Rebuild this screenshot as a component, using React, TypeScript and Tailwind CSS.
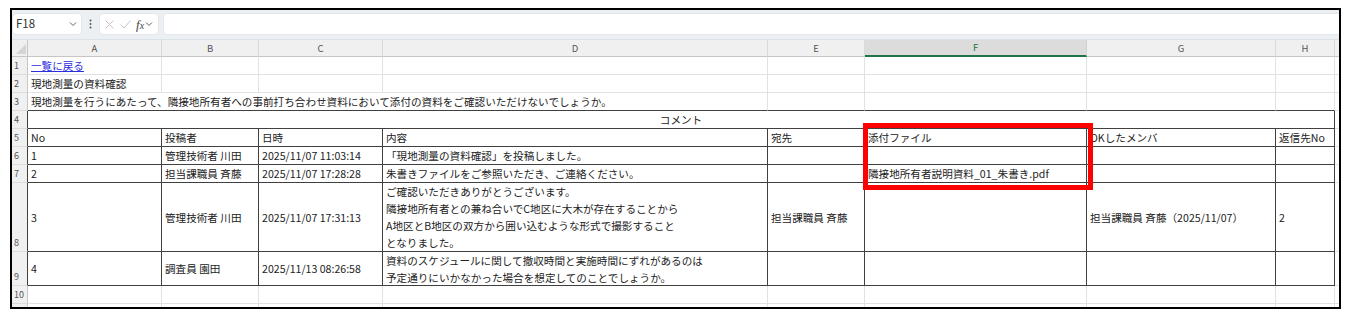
import React from "react";

const txt = "px-[3px] flex whitespace-nowrap text-[#222] leading-[17px]";
const gl = "border-r border-b border-r-[#e2e2e2] border-b-[#e2e2e2]";
const glDb = "border-r border-b border-r-[#e2e2e2] border-b-[#404040]";
const dd = "border-r border-b border-r-[#404040] border-b-[#404040]";
const extra = "border-b border-b-[#e2e2e2]";

function RowHead({ n, dark }: { n?: number; dark?: boolean }) {
  return (
    <div
      className={
        "bg-[#f0f0f0] border-b border-b-[#dcdcdc] border-r flex items-end pl-[2px] pb-[1px] text-[9px] leading-[14px] text-[#555] " +
        (dark ? "border-r-[#404040]" : "border-r-[#c6c6c6]")
      }
    >
      {n}
    </div>
  );
}

function Blank({ cls, n }: { cls: string; n: number }) {
  return (
    <>
      {Array.from({ length: n }).map((_, i) => (
        <div key={i} className={cls} />
      ))}
    </>
  );
}

function DataRow({ n, cells }: { n: number; cells: (string | string[])[] }) {
  return (
    <>
      <RowHead n={n} dark />
      {cells.map((c, i) =>
        Array.isArray(c) ? (
          <div key={i} className={dd + " " + txt + " flex-col items-start"}>
            {c.map((l, j) => (
              <span key={j}>{l}</span>
            ))}
          </div>
        ) : (
          <div key={i} className={dd + " " + txt + " items-center"}>
            {c}
          </div>
        )
      )}
      <div className={extra} />
    </>
  );
}

function Chevron({ x }: { x?: string }) {
  return (
    <svg width="8" height="6" viewBox="0 0 8 6" className={x}>
      <path d="M1 1.5 L4 4.5 L7 1.5" fill="none" stroke="#666" strokeWidth="1" />
    </svg>
  );
}

export default function App() {
  const colHeads = ["A", "B", "C", "D", "E", "F", "G", "H"];
  return (
    <div className="w-[1353px] h-[322px] bg-white relative font-['Noto_Sans_CJK_JP',sans-serif] text-[10.6px]">
      <div className="ml-[10px] pt-[8px]">
        <div className="w-[1331px] h-[301px] border-2 border-black overflow-hidden flex flex-col">
          {/* formula bar */}
          <div className="h-[30px] shrink-0 bg-[#edf0f3] border-b border-b-[#dde2e7] flex items-start pt-[3px]">
            <div className="w-[70px] h-[22px] bg-white rounded-[4px] border border-[#e3e6ea] flex items-center justify-between pl-[3px] pr-[4px]">
              <span className="text-[11.5px] text-[#333]">F18</span>
              <Chevron />
            </div>
            <div className="w-[17px] h-[22px] flex items-center justify-center">
              <svg width="3" height="10" viewBox="0 0 3 10">
                <circle cx="1.5" cy="1.5" r="1" fill="#555" />
                <circle cx="1.5" cy="5" r="1" fill="#555" />
                <circle cx="1.5" cy="8.5" r="1" fill="#555" />
              </svg>
            </div>
            <div className="w-[60px] h-[22px] bg-white rounded-[4px] border border-[#e3e6ea] flex items-center pl-[5px] gap-[6px]">
              <svg width="9" height="9" viewBox="0 0 9 9">
                <path d="M0.5 0.5 L8.5 8.5 M8.5 0.5 L0.5 8.5" stroke="#c4c4c4" strokeWidth="1" />
              </svg>
              <svg width="11" height="9" viewBox="0 0 11 9">
                <path d="M0.5 4.5 L4 8 L10.5 0.5" fill="none" stroke="#c4c4c4" strokeWidth="1" />
              </svg>
              <span className="font-['Liberation_Serif',serif] italic text-[13px] text-[#444] leading-none -ml-[1px]">
                f<span className="text-[10px]">x</span>
              </span>
              <Chevron x="-ml-[5px]" />
            </div>
            <div className="ml-[4px] flex-1 h-[22px] bg-white rounded-l-[4px] border border-r-0 border-[#e3e6ea]" />
          </div>

          {/* sheet */}
          <div className="flex-1 grid grid-cols-[16px_134px_97px_124px_385px_97px_222px_189px_59px_1fr] grid-rows-[17px_18px_18px_18px_18px_18px_18px_18px_69px_34px_18px_18px] overflow-hidden">
            {/* header row */}
            <div className="bg-[#f0f0f0] border-b border-b-[#c6c6c6] border-r border-r-[#c6c6c6] relative">
              <svg width="10" height="10" viewBox="0 0 10 10" className="absolute right-[1px] bottom-[2px]">
                <path d="M10 0 L10 10 L0 10 Z" fill="#d4d4d4" />
              </svg>
            </div>
            {colHeads.map((h) =>
              h === "F" ? (
                <div
                  key={h}
                  className="bg-[#dcdcdc] border-b-2 border-b-[#217346] border-r border-r-[#d0d0d0] flex items-center justify-center text-[9.5px] text-[#217346]"
                >
                  {h}
                </div>
              ) : (
                <div
                  key={h}
                  className="bg-[#f0f0f0] border-b border-b-[#c6c6c6] border-r border-r-[#dadada] flex items-center justify-center text-[9.5px] text-[#555]"
                >
                  {h}
                </div>
              )
            )}
            <div className="bg-[#f0f0f0] border-b border-b-[#c6c6c6]" />

            {/* row 1 */}
            <RowHead n={1} />
            <div className={gl + " " + txt + " items-center"}>
              <span className="text-[#2d2de0] underline decoration-[#2d2de0]">一覧に戻る</span>
            </div>
            <Blank cls={gl} n={7} />
            <div className={extra} />

            {/* row 2 */}
            <RowHead n={2} />
            <div className={gl + " " + txt + " items-center"}>現地測量の資料確認</div>
            <Blank cls={gl} n={7} />
            <div className={extra} />

            {/* row 3 */}
            <RowHead n={3} />
            <div className={"col-span-4 " + glDb + " " + txt + " items-center"}>
              現地測量を行うにあたって、隣接地所有者への事前打ち合わせ資料において添付の資料をご確認いただけないでしょうか。
            </div>
            <Blank cls={glDb} n={4} />
            <div className={extra} />

            {/* row 4 */}
            <RowHead n={4} dark />
            <div className={"col-span-8 " + dd + " " + txt + " items-center justify-center"}>コメント</div>
            <div className={extra} />

            <DataRow
              n={5}
              cells={["No", "投稿者", "日時", "内容", "宛先", "添付ファイル", "OKしたメンバ", "返信先No"]}
            />
            <DataRow
              n={6}
              cells={["1", "管理技術者 川田", "2025/11/07 11:03:14", "「現地測量の資料確認」を投稿しました。", "", "", "", ""]}
            />
            <DataRow
              n={7}
              cells={[
                "2",
                "担当課職員 斉藤",
                "2025/11/07 17:28:28",
                "朱書きファイルをご参照いただき、ご連絡ください。",
                "",
                "隣接地所有者説明資料_01_朱書き.pdf",
                "",
                "",
              ]}
            />
            <DataRow
              n={8}
              cells={[
                "3",
                "管理技術者 川田",
                "2025/11/07 17:31:13",
                [
                  "ご確認いただきありがとうございます。",
                  "隣接地所有者との兼ね合いでC地区に大木が存在することから",
                  "A地区とB地区の双方から囲い込むような形式で撮影すること",
                  "となりました。",
                ],
                "担当課職員 斉藤",
                "",
                "担当課職員 斉藤（2025/11/07）",
                "2",
              ]}
            />
            <DataRow
              n={9}
              cells={[
                "4",
                "調査員 園田",
                "2025/11/13 08:26:58",
                [
                  "資料のスケジュールに関して撤収時間と実施時間にずれがあるのは",
                  "予定通りにいかなかった場合を想定してのことでしょうか。",
                ],
                "",
                "",
                "",
                "",
              ]}
            />

            {/* row 10 */}
            <RowHead n={10} />
            <Blank cls={gl} n={8} />
            <div className={extra} />

            {/* row 11 partial (clipped) */}
            <RowHead />
            <Blank cls={gl} n={8} />
            <div className={extra} />
          </div>
        </div>
      </div>

      {/* red annotation box */}
      <div className="absolute left-[863px] top-[123px] w-[230px] h-[67px] border-[5px] border-[#ff0000]" />
    </div>
  );
}
